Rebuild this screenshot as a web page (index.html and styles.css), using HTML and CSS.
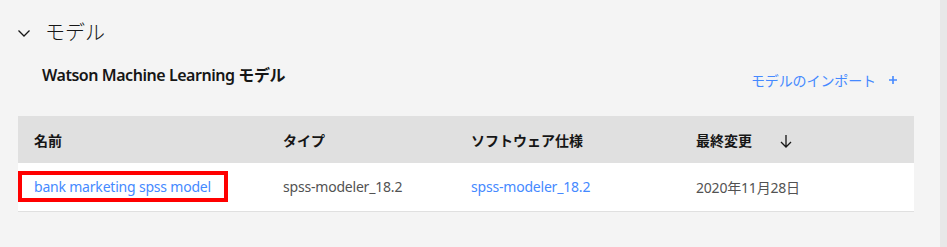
FILE: index.html
```html
<!DOCTYPE html>
<html lang="ja">

<head>
  <meta charset="UTF-8">
  <meta name="viewport" content="width=device-width, initial-scale=1.0">
  <title>モデル</title>
  <link rel="stylesheet" href="styles.css">
</head>

<body>
  <div class="page">
    <div class="content">
      <div class="section-header">
        <svg class="chevron" width="16" height="16" viewBox="0 0 16 16" fill="none">
          <path d="M2.5 5.5L8 11l5.5-5.5" stroke="#161616" stroke-width="1.3" />
        </svg>
        <span class="section-title">モデル</span>
      </div>

      <div class="sub-header">
        <div class="sub-title">Watson Machine Learning モデル</div>
        <a class="import-link" href="#">モデルのインポート
          <svg width="16" height="16" viewBox="0 0 16 16" fill="none">
            <path d="M8 4v8M4 8h8" stroke="#4589ff" stroke-width="1.6" />
          </svg>
        </a>
      </div>

      <table class="models">
        <thead>
          <tr>
            <th class="col-name">名前</th>
            <th class="col-type">タイプ</th>
            <th class="col-spec">ソフトウェア仕様</th>
            <th class="col-date">最終変更
              <svg class="sort" width="16" height="16" viewBox="0 0 16 16" fill="none">
                <path d="M8 2v12M3 9l5 5 5-5" stroke="#161616" stroke-width="1.3" />
              </svg>
            </th>
          </tr>
        </thead>
        <tbody>
          <tr>
            <td class="name-cell"><span class="highlight"><a href="#">bank marketing spss model</a></span></td>
            <td>spss-modeler_18.2</td>
            <td><a href="#">spss-modeler_18.2</a></td>
            <td>2020年11月28日</td>
          </tr>
        </tbody>
      </table>
    </div>
    <div class="scroll-strip"></div>
  </div>
</body>

</html>
```

FILE: styles.css
```css
* {
  box-sizing: border-box;
  margin: 0;
  padding: 0;
}

body {
  font-family: 'Noto Sans', 'Noto Sans CJK JP', sans-serif;
  background-color: #f4f4f4;
  color: #161616;
}

.page {
  display: flex;
  min-height: 247px;
}

.content {
  flex: 1;
  padding: 21px 26px 0 18px;
}

.scroll-strip {
  width: 7px;
  background-color: #e8e8e8;
}

.section-header {
  display: flex;
  align-items: center;
  height: 24px;
}

.chevron {
  margin-left: -2px;
  margin-right: 13px;
}

.section-title {
  font-size: 20px;
  font-weight: 300;
  line-height: 24px;
}

.sub-header {
  display: flex;
  justify-content: space-between;
  padding: 20px 0 0 24px;
  height: 71px;
}

.sub-title {
  font-size: 16px;
  font-weight: 600;
  line-height: 20px;
  letter-spacing: -0.45px;
}

.import-link {
  display: flex;
  align-items: center;
  gap: 9px;
  margin-top: 6px;
  margin-right: 13px;
  height: 18px;
  font-size: 14px;
  letter-spacing: -0.1px;
}

a {
  color: #4589ff;
  text-decoration: none;
}

table.models {
  width: 100%;
  border-collapse: collapse;
  table-layout: fixed;
  font-size: 14px;
}

th {
  height: 47px;
  background-color: #e0e0e0;
  text-align: left;
  font-weight: 600;
  padding: 0 16px;
}

td {
  height: 48px;
  background-color: #fff;
  border-bottom: 1px solid #e0e0e0;
  color: #525252;
  padding: 0 16px;
  letter-spacing: -0.2px;
}

.col-name {
  width: 249px;
}

.col-type {
  width: 188px;
}

.col-spec {
  width: 225px;
}

.sort {
  vertical-align: middle;
  margin-left: 22px;
  margin-top: -2px;
}

td.name-cell {
  padding: 0;
}

.highlight {
  display: inline-block;
  border: 4px solid #ff0000;
  padding: 2px 13px 2px 12px;
  line-height: 19px;
}
```
